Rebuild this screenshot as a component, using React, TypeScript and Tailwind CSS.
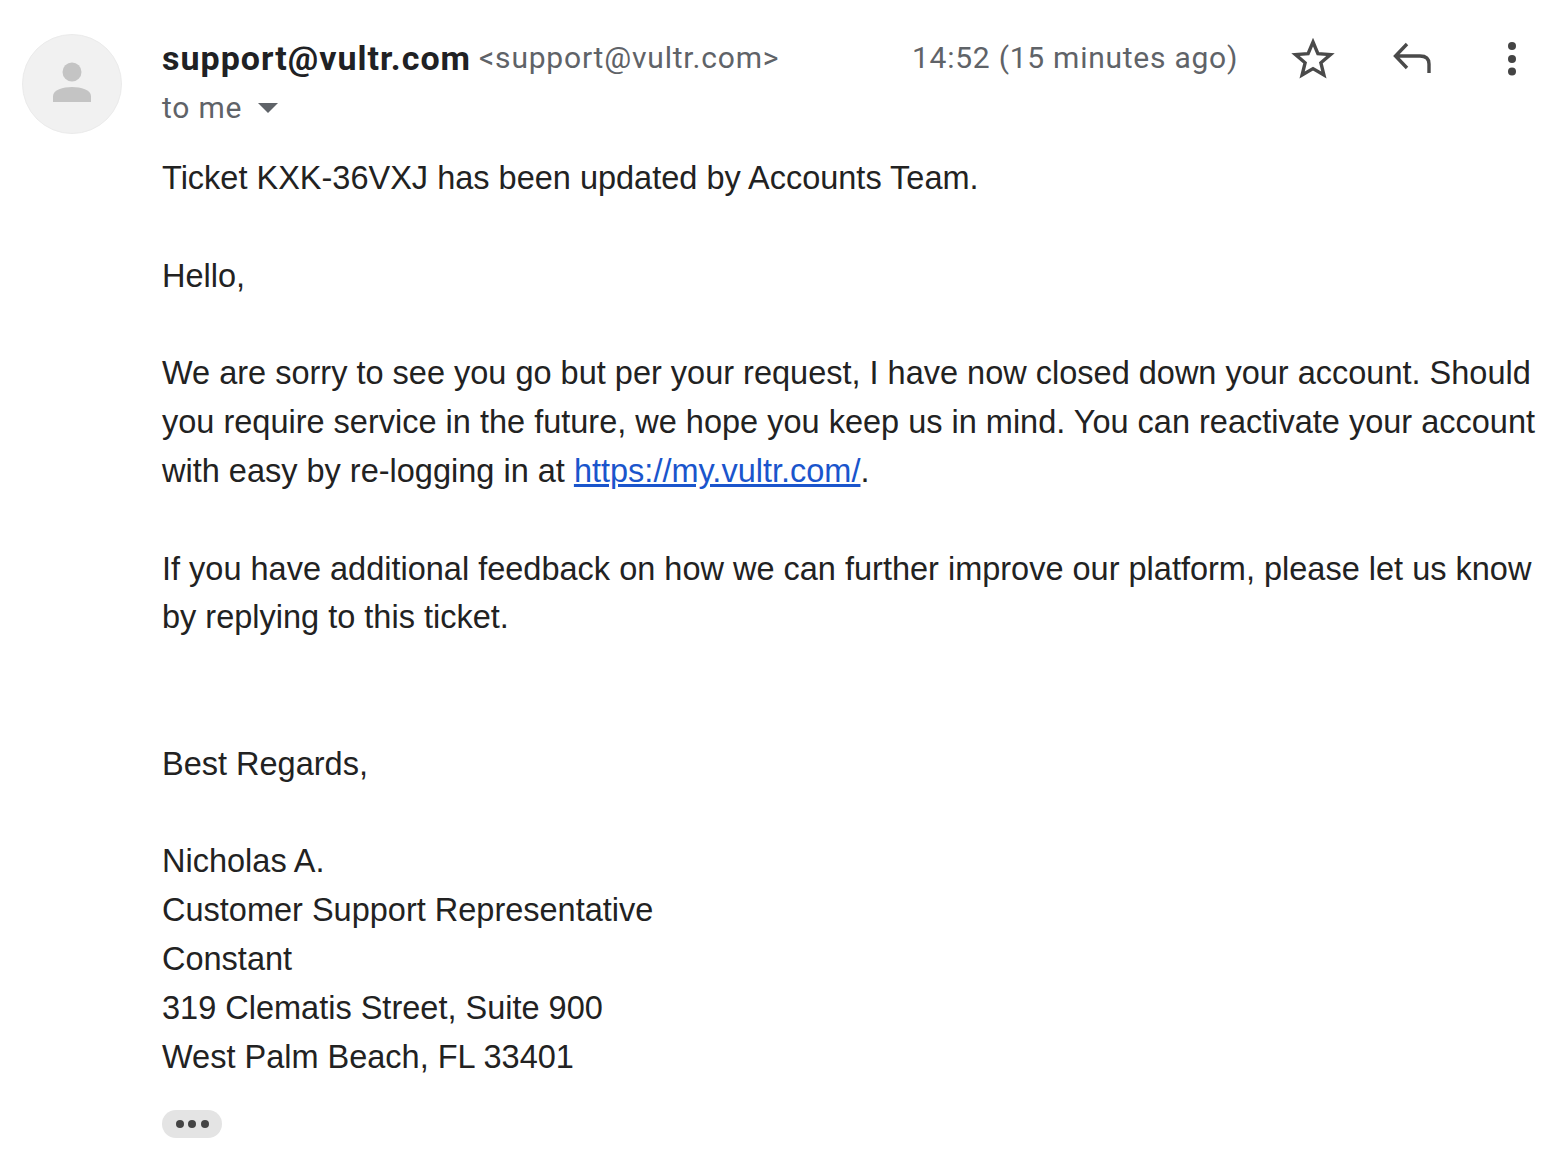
const Avatar = () => (
  <div className="w-[100px] h-[100px] rounded-full bg-[#f1f1f1] border border-[#ebebeb] flex items-center justify-center shrink-0">
    <svg width="40" height="44" viewBox="0 0 40 44">
      <circle cx="20" cy="10" r="9.5" fill="#c4c4c4" />
      <path d="M1 40V34C1 28 11 25 20 25s19 3 19 9v6z" fill="#c4c4c4" />
    </svg>
  </div>
);

const App = () => {
  return (
    <div className="w-[1546px] h-[1170px] bg-white overflow-hidden flex items-start gap-10 pl-[22px] pt-[34px] font-['Liberation_Sans',Arial,sans-serif]">
      <Avatar />
      <div className="flex-1 min-w-0">
        {/* Header row */}
        <div className="flex items-start h-[50px] font-['Roboto',sans-serif]">
          <div className="w-[750px] flex items-start pt-[2px] whitespace-nowrap">
            <span className="text-[34px] leading-[44px] tracking-[1px] font-bold text-[#202124]">support@vultr.com</span>
            <span className="ml-[8px] text-[30px] leading-[44px] tracking-[0.8px] text-[#5f6368]">&lt;support@vultr.com&gt;</span>
          </div>
          <span className="text-[30px] leading-[44px] pt-[2px] tracking-[0.75px] text-[#5f6368] whitespace-nowrap">14:52 (15 minutes ago)</span>
          <div className="flex items-center h-[50px] ml-[52px] gap-[54px]">
            <svg width="46" height="46" viewBox="0 0 46 46" fill="none" stroke="#4a4a4a" strokeWidth="3.4" strokeLinejoin="miter">
              <path d="M23 6l4.9 11.6 12.6 1-9.6 8.2 3 12.2L23 32.6 12.1 39l3-12.2-9.6-8.2 12.6-1z" />
            </svg>
            <svg width="46" height="46" viewBox="0 0 46 46" fill="none" stroke="#4a4a4a" strokeWidth="3.4">
              <path d="M17 8L5.5 20 17 32M5.5 20H30c6 0 9 3 9 8v9" />
            </svg>
            <svg width="20" height="46" viewBox="0 0 20 46" fill="#444444" className="ml-[12px]">
              <circle cx="10" cy="10" r="4" />
              <circle cx="10" cy="23" r="4" />
              <circle cx="10" cy="35.5" r="4" />
            </svg>
          </div>
        </div>
        <div className="flex items-center h-[46px] font-['Roboto',sans-serif] text-[30px] tracking-[0.8px] text-[#5f6368]">
          to me
          <span className="ml-[16px] mt-[2px] w-0 h-0 border-x-[10px] border-x-transparent border-t-[10px] border-t-[#5f6368]" />
        </div>

        {/* Message body */}
        <div className="w-[1376px] mt-[24.2px] text-[32.5px] leading-[48.8px] text-[#222222]">
          <p>Ticket KXK-36VXJ has been updated by Accounts Team.</p>
          <p className="mt-[48.8px]">Hello,</p>
          <p className="mt-[48.8px]">
            We are sorry to see you go but per your request, I have now closed down your account. Should you require service in the future, we hope you keep us in mind. You can reactivate your account with easy by re-logging in at{' '}
            <a href="#" className="text-[#1a55cc] underline">https://my.vultr.com/</a>.
          </p>
          <p className="mt-[48.8px]">If you have additional feedback on how we can further improve our platform, please let us know by replying to this ticket.</p>
          <p className="mt-[97.6px]">Best Regards,</p>
          <p className="mt-[48.8px]">Nicholas A.</p>
          <p>Customer Support Representative</p>
          <p>Constant</p>
          <p>319 Clematis Street, Suite 900</p>
          <p>West Palm Beach, FL 33401</p>
        </div>

        <div className="mt-[28.5px] w-[60px] h-[28px] rounded-full bg-[#e4e4e4] flex items-center justify-center gap-[4.5px]">
          <span className="w-[8px] h-[8px] rounded-full bg-[#444444]" />
          <span className="w-[8px] h-[8px] rounded-full bg-[#444444]" />
          <span className="w-[8px] h-[8px] rounded-full bg-[#444444]" />
        </div>
      </div>
    </div>
  );
};

export default App;
